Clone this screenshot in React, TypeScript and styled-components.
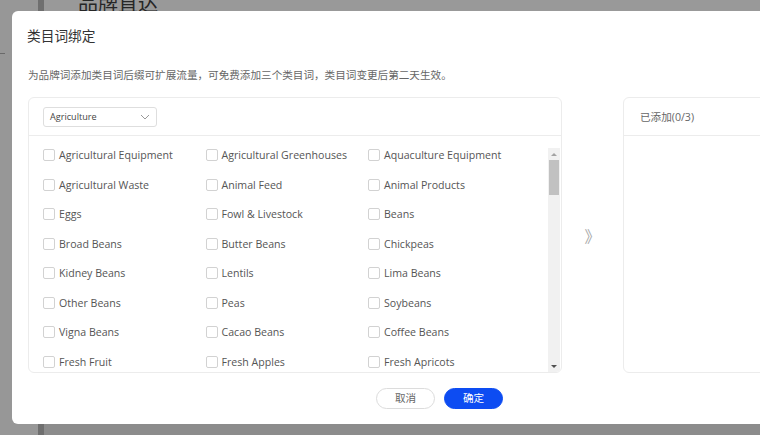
import styled, { createGlobalStyle } from 'styled-components'

const GlobalStyle = createGlobalStyle`
  html, body {
    margin: 0;
    padding: 0;
  }
  body {
    width: 760px;
    height: 435px;
    overflow: hidden;
    font-family: "Open Sans", "Noto Sans CJK SC", sans-serif;
  }
`

const categories = [
  'Agricultural Equipment', 'Agricultural Greenhouses', 'Aquaculture Equipment',
  'Agricultural Waste', 'Animal Feed', 'Animal Products',
  'Eggs', 'Fowl & Livestock', 'Beans',
  'Broad Beans', 'Butter Beans', 'Chickpeas',
  'Kidney Beans', 'Lentils', 'Lima Beans',
  'Other Beans', 'Peas', 'Soybeans',
  'Vigna Beans', 'Cacao Beans', 'Coffee Beans',
  'Fresh Fruit', 'Fresh Apples', 'Fresh Apricots',
]

const Page = styled.div`
  position: relative;
  display: flex;
  width: 760px;
  height: 435px;
  overflow: hidden;
  background: #8c8c8c;
`

const Sidebar = styled.aside`
  width: 38px;
  flex-shrink: 0;
  background: #979797;
  border-right: 6px solid #6f6f6f;
  padding-top: 53px;
  box-sizing: content-box;
`

const SideMark = styled.div`
  width: 5px;
  height: 1px;
  background: #6a6a6a;
`

const Main = styled.main`
  flex: 1;
  padding-left: 34px;
  background: linear-gradient(#999 0, #999 11px, #8c8c8c 11px);
`

const PageTitle = styled.h1`
  margin: -9px 0 0;
  font-size: 20px;
  font-weight: 400;
  line-height: 26px;
  color: #262626;
`

const Overlay = styled.div`
  position: absolute;
  inset: 0;
  padding: 11px 0 0 12px;
`

const Modal = styled.div`
  width: 855px;
  height: 413px;
  box-sizing: border-box;
  padding: 0 16px;
  background: #fff;
  border-radius: 6px;
  display: flex;
  flex-direction: column;
`

const Title = styled.div`
  height: 48px;
  display: flex;
  align-items: center;
  margin-left: -1px;
  font-size: 13.7px;
  color: #333;
`

const Desc = styled.div`
  margin-top: 8px;
  line-height: 16px;
  font-size: 10.6px;
  color: #666;
`

const Body = styled.div`
  margin-top: 14px;
  height: 276px;
  display: flex;
`

const Panel = styled.section<{ $width?: number }>`
  ${p => (p.$width ? `width: ${p.$width}px;` : 'flex: 1;')}
  box-sizing: border-box;
  border: 1px solid #ececec;
  border-radius: 6px;
  display: flex;
  flex-direction: column;
  overflow: hidden;
`

const PanelHead = styled.div<{ $pad: number }>`
  height: 38px;
  box-sizing: border-box;
  flex-shrink: 0;
  border-bottom: 1px solid #ececec;
  display: flex;
  align-items: center;
  padding-left: ${p => p.$pad}px;
  font-size: 10.6px;
  color: #666;
`

const Select = styled.div`
  width: 114px;
  height: 20px;
  box-sizing: border-box;
  border: 1px solid #dedede;
  border-radius: 3px;
  display: flex;
  align-items: center;
  justify-content: space-between;
  padding: 0 6px;
  font-size: 9.1px;
  color: #444;
`

const ListArea = styled.div`
  flex: 1;
  min-height: 0;
  display: flex;
  padding-top: 11px;
`

const Grid = styled.div`
  flex: 1;
  padding-left: 14px;
  display: grid;
  grid-template-columns: repeat(3, 162.5px);
  grid-auto-rows: 16px;
  row-gap: 13.57px;
  align-content: start;
  overflow: hidden;
`

const Item = styled.label`
  display: flex;
  align-items: center;
  gap: 4px;
  font-size: 10.6px;
  color: #555;
  white-space: nowrap;
`

const Box = styled.span`
  width: 12px;
  height: 12px;
  box-sizing: border-box;
  border: 1px solid #d2d2d2;
  border-radius: 2px;
  flex-shrink: 0;
`

const Scrollbar = styled.div`
  width: 12px;
  margin: 1px 1px 0 0;
  background: #f1f1f1;
  display: flex;
  flex-direction: column;
  align-items: center;
`

const ScrollBtn = styled.div<{ $down?: boolean }>`
  height: 12px;
  display: flex;
  align-items: center;
  justify-content: center;
  &::after {
    content: '';
    border-left: 3px solid transparent;
    border-right: 3px solid transparent;
    ${p => (p.$down ? 'border-top: 3px solid #505050;' : 'border-bottom: 3px solid #a3a3a3;')}
  }
`

const Thumb = styled.div`
  width: 10px;
  height: 35px;
  background: #c1c1c1;
`

const Spacer = styled.div`
  flex: 1;
`

const Transfer = styled.div`
  width: 61px;
  display: flex;
  align-items: center;
  justify-content: center;
  font-size: 16px;
  color: #a8a8a8;
`

const Footer = styled.div`
  margin-top: 15px;
  display: flex;
  justify-content: center;
  gap: 9px;
`

const Button = styled.button<{ $primary?: boolean }>`
  width: 59px;
  height: 21px;
  border-radius: 11px;
  box-sizing: border-box;
  padding: 0;
  font-family: inherit;
  font-size: 10.6px;
  line-height: 19px;
  border: 1px solid ${p => (p.$primary ? '#0d4cf2' : '#dcdcdc')};
  background: ${p => (p.$primary ? '#0d4cf2' : '#fff')};
  color: ${p => (p.$primary ? '#fff' : '#666')};
`

function Chevron() {
  return (
    <svg width="10" height="6" viewBox="0 0 10 6">
      <polyline points="1,1 5,5 9,1" fill="none" stroke="#999" strokeWidth="1" />
    </svg>
  )
}

export default function App() {
  return (
    <>
      <GlobalStyle />
      <Page>
        <Sidebar>
          <SideMark />
        </Sidebar>
        <Main>
          <PageTitle>品牌直达</PageTitle>
        </Main>
        <Overlay>
          <Modal>
            <Title>类目词绑定</Title>
            <Desc>为品牌词添加类目词后缀可扩展流量，可免费添加三个类目词，类目词变更后第二天生效。</Desc>
            <Body>
              <Panel $width={534}>
                <PanelHead $pad={14}>
                  <Select>
                    <span>Agriculture</span>
                    <Chevron />
                  </Select>
                </PanelHead>
                <ListArea>
                  <Grid>
                    {categories.map(c => (
                      <Item key={c}>
                        <Box />
                        {c}
                      </Item>
                    ))}
                  </Grid>
                  <Scrollbar>
                    <ScrollBtn />
                    <Thumb />
                    <Spacer />
                    <ScrollBtn $down />
                  </Scrollbar>
                </ListArea>
              </Panel>
              <Transfer>》</Transfer>
              <Panel>
                <PanelHead $pad={16}>已添加(0/3)</PanelHead>
              </Panel>
            </Body>
            <Footer>
              <Button>取消</Button>
              <Button $primary>确定</Button>
            </Footer>
          </Modal>
        </Overlay>
      </Page>
    </>
  )
}
